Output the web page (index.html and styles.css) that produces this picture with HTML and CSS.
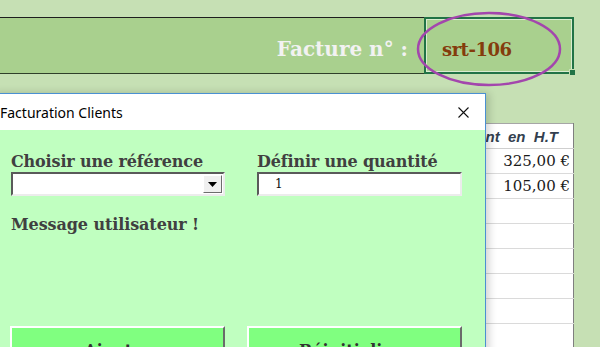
FILE: index.html
```html
<!DOCTYPE html>
<html lang="fr">
<head>
    <meta charset="UTF-8">
    <meta name="viewport" content="width=device-width, initial-scale=1.0">
    <title>Facturation Clients</title>
    <link rel="stylesheet" href="styles.css">
</head>
<body>
    <div class="sheet">
        <div class="banner">
            <span class="banner-label">Facture n° :</span>
            <div class="invoice-cell">
                <span class="invoice-num">srt-106</span>
                <span class="cell-handle"></span>
                <svg class="circle-mark" width="150" height="80" viewBox="0 0 150 80">
                    <ellipse cx="75" cy="40" rx="71" ry="36" fill="none" stroke="#a346ad" stroke-width="2.5"/>
                </svg>
            </div>
        </div>

        <div class="grid-area">
            <table class="amounts">
                <tr class="amounts-head"><td>Montant  en  H.T</td></tr>
                <tr><td>325,00 €</td></tr>
                <tr><td>105,00 €</td></tr>
                <tr><td></td></tr>
                <tr><td></td></tr>
                <tr><td></td></tr>
                <tr><td></td></tr>
                <tr><td></td></tr>
                <tr><td></td></tr>
            </table>
        </div>
    </div>

    <div class="dialog">
        <div class="dialog-title">
            <span>Facturation Clients</span>
            <svg class="close-icon" width="11" height="11" viewBox="0 0 11 11">
                <path d="M0.5 0.5 L10.5 10.5 M10.5 0.5 L0.5 10.5" stroke="#111" stroke-width="1.1"/>
            </svg>
        </div>
        <div class="dialog-body">
            <div class="fields">
                <div class="field field-ref">
                    <label>Choisir une référence</label>
                    <div class="combo">
                        <span class="combo-btn">
                            <svg width="9" height="5" viewBox="0 0 9 5"><path d="M0 0 H9 L4.5 5 Z" fill="#000"/></svg>
                        </span>
                    </div>
                </div>
                <div class="field field-qty">
                    <label>Définir une quantité</label>
                    <div class="textbox">1</div>
                </div>
            </div>
            <p class="message">Message utilisateur !</p>
            <div class="actions">
                <button class="btn">Ajouter</button>
                <button class="btn">Réinitialiser</button>
            </div>
        </div>
    </div>
</body>
</html>
```

FILE: styles.css
```css
body {
    margin: 0;
    width: 600px;
    height: 347px;
    overflow: hidden;
    position: relative;
    background-color: #c6e0b4;
    font-family: "DejaVu Serif", serif;
}

.sheet {
    padding-top: 17px;
}

/* bandeau du haut */
.banner {
    width: 574px;
    height: 57px;
    box-sizing: border-box;
    background: #a9d08e;
    border-top: 1px solid #1e1e1e;
    border-bottom: 1px solid #2f3f2a;
    display: flex;
    justify-content: flex-end;
    align-items: stretch;
}

.banner-label {
    align-self: center;
    margin-right: 16px;
    padding-top: 6px;
    color: #f2f2f2;
    font-weight: bold;
    font-size: 20px;
}

.invoice-cell {
    position: relative;
    width: 150px;
    margin: -1px 0;
    box-sizing: border-box;
    border: 2px solid #217346;
    box-shadow: inset 0 0 0 1px #d9ecd0;
    display: flex;
    align-items: center;
    padding-left: 16px;
    padding-top: 7px;
}

.invoice-num {
    color: #843c0c;
    font-weight: bold;
    font-size: 18px;
    letter-spacing: -0.5px;
}

.cell-handle {
    position: absolute;
    right: -4px;
    bottom: -4px;
    width: 5px;
    height: 5px;
    background: #217346;
    border: 1px solid #c6e0b4;
}

.circle-mark {
    position: absolute;
    left: -12px;
    top: -10px;
}

/* tableau derrière la fenêtre */
.grid-area {
    display: flex;
    justify-content: flex-end;
    margin-top: 49px;
    padding-right: 26px;
}

.amounts {
    width: 190px;
    border-collapse: collapse;
    background: #fff;
    border-top: 1px solid #a6a6a6;
    border-right: 1px solid #7f7f7f;
}

.amounts td {
    height: 24px;
    padding: 0 3px 0 0;
    border-bottom: 1px solid #dadada;
    text-align: right;
    font-size: 15px;
    color: #1a1a1a;
    white-space: pre;
}

.amounts-head td {
    font-family: "Liberation Sans", Arial, sans-serif;
    font-style: italic;
    font-weight: bold;
    font-size: 15px;
    color: #333f4f;
    padding-right: 15px;
    border-bottom-color: #cfcfcf;
}

/* fenêtre de saisie */
.dialog {
    position: absolute;
    left: -8px;
    top: 93px;
    width: 494px;
    height: 280px;
    box-sizing: border-box;
    border: 1px solid #4a90d2;
    background: #c0ffc0;
    box-shadow: 3px 0 8px rgba(0, 0, 0, 0.18);
}

.dialog-title {
    height: 36px;
    background: #fff;
    display: flex;
    align-items: center;
    justify-content: space-between;
    padding: 0 16px 0 7px;
    font-family: "Noto Sans", sans-serif;
    font-size: 14px;
    color: #000;
}

.close-icon {
    display: block;
}

.dialog-body {
    padding: 22px 0 0 18px;
}

.fields {
    display: flex;
    gap: 32px;
}

.field label {
    display: block;
    height: 20px;
    line-height: 20px;
    font-weight: bold;
    font-size: 16px;
    letter-spacing: -0.15px;
    color: #404040;
    white-space: nowrap;
}

.field-ref {
    width: 214px;
}

.field-qty {
    width: 205px;
}

.combo,
.textbox {
    height: 24px;
    box-sizing: border-box;
    background: #fff;
    border: 2px solid;
    border-color: #5a5a5a #ececec #ececec #5a5a5a;
}

.combo {
    display: flex;
    justify-content: flex-end;
    align-items: center;
    padding-right: 1px;
}

.combo-btn {
    width: 19px;
    height: 18px;
    box-sizing: border-box;
    background: #f0f0f0;
    border: 1px solid;
    border-color: #fff #6d6d6d #6d6d6d #fff;
    display: flex;
    align-items: center;
    justify-content: center;
}

.combo-btn svg {
    display: block;
}

.textbox {
    padding-left: 16px;
    font-size: 12px;
    line-height: 21px;
    color: #111;
}

.message {
    margin: 19px 0 0;
    height: 20px;
    line-height: 20px;
    font-weight: bold;
    font-size: 16px;
    letter-spacing: -0.1px;
    color: #404040;
}

.actions {
    display: flex;
    gap: 22px;
    margin: 91px 0 0 -1px;
}

.btn {
    width: 215px;
    height: 44px;
    box-sizing: border-box;
    background: #80ff80;
    border: 2px solid;
    border-color: #fff #6a6a6a #6a6a6a #fff;
    font-family: "DejaVu Serif", serif;
    font-weight: bold;
    font-size: 16px;
    color: #333;
    padding-top: 6px;
}
```
